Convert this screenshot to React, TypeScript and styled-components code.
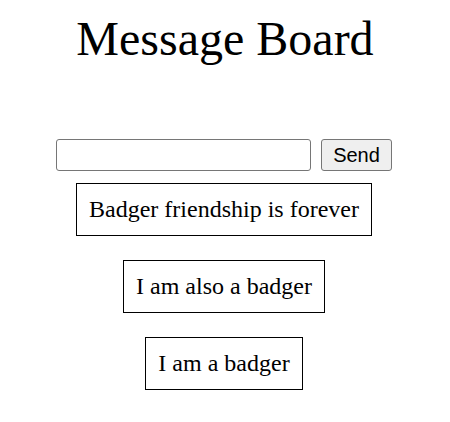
import React from "react";
import styled, { createGlobalStyle } from "styled-components";

const Global = createGlobalStyle`
  html, body { margin: 0; padding: 0; background: #fff; }
  body { font-family: "Liberation Serif", "Times New Roman", serif; color: #000; }
`;

const Page = styled.div`
  display: flex;
  flex-direction: column;
  align-items: center;
  padding-top: 11px;
`;

const Title = styled.h1`
  margin: 0;
  font-family: "Liberation Serif", serif;
  font-size: 48px;
  font-weight: normal;
  line-height: 55px;
`;

const Form = styled.form`
  display: flex;
  align-items: center;
  gap: 10px;
  margin-top: 73px;
  margin-left: -2px;
`;

const TextInput = styled.input`
  box-sizing: border-box;
  width: 255px;
  height: 32px;
  border: 1px solid #767676;
  border-radius: 3px;
  padding: 2px 4px;
  font-family: "Liberation Sans", Arial, sans-serif;
  font-size: 20px;
  background: #fff;
`;

const SendButton = styled.button`
  box-sizing: border-box;
  width: 71px;
  height: 32px;
  border: 1px solid #767676;
  border-radius: 3px;
  background: #efefef;
  font-family: "Liberation Sans", Arial, sans-serif;
  font-size: 20px;
  color: #000;
  padding: 0;
`;

const List = styled.div`
  display: flex;
  flex-direction: column;
  align-items: center;
  gap: 24px;
  margin-top: 12px;
  margin-left: -2px;
`;

const Message = styled.div`
  border: 1px solid #000;
  padding: 12px;
  font-size: 24px;
  line-height: 27px;
`;

const messages = [
  "Badger friendship is forever",
  "I am also a badger",
  "I am a badger",
];

export default function App() {
  return (
    <>
      <Global />
      <Page>
        <Title>Message Board</Title>
        <Form onSubmit={(e) => e.preventDefault()}>
          <TextInput type="text" />
          <SendButton type="submit">Send</SendButton>
        </Form>
        <List>
          {messages.map((m) => (
            <Message key={m}>{m}</Message>
          ))}
        </List>
      </Page>
    </>
  );
}
